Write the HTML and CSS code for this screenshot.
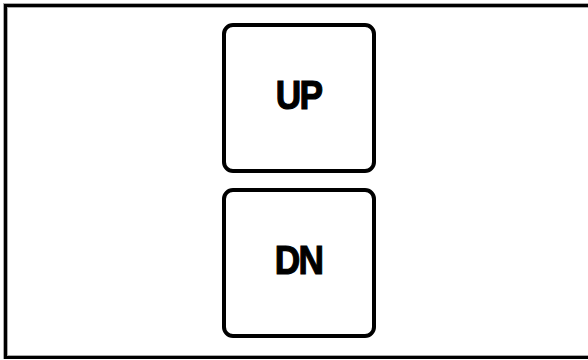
FILE: index.html
```html
<!DOCTYPE html>
<html>
<head>
<meta charset="utf-8">
<link rel="stylesheet" href="styles.css">
</head>
<body>
<div class="frame">
  <div class="key"><span class="label">UP</span></div>
  <div class="key"><span class="label">DN</span></div>
</div>
</body>
</html>
```
FILE: styles.css
```css
html, body {
  margin: 0;
  padding: 0;
  background: #fff;
  overflow: hidden;
}
.frame {
  margin: 4px 0 0 4px;
  width: 583px;
  height: 333px;
  padding-top: 16px;
  border: 3px solid #000;
  box-shadow: 0 0 0 1px #aaa, inset 0 0 0 1px #aaa;
  display: flex;
  flex-direction: column;
  align-items: center;
  gap: 15px;
}
.key {
  box-sizing: border-box;
  width: 154px;
  height: 150px;
  border: 4px solid #000;
  border-radius: 11px;
  display: flex;
  align-items: center;
  justify-content: center;
  padding-bottom: 5px;
}
.label {
  display: inline-block;
  font-family: "Liberation Sans", Arial, sans-serif;
  font-weight: bold;
  font-size: 41px;
  letter-spacing: -2px;
  color: #000;
  -webkit-text-stroke: 1.2px #000;
  transform: scaleX(0.86);
}
```
